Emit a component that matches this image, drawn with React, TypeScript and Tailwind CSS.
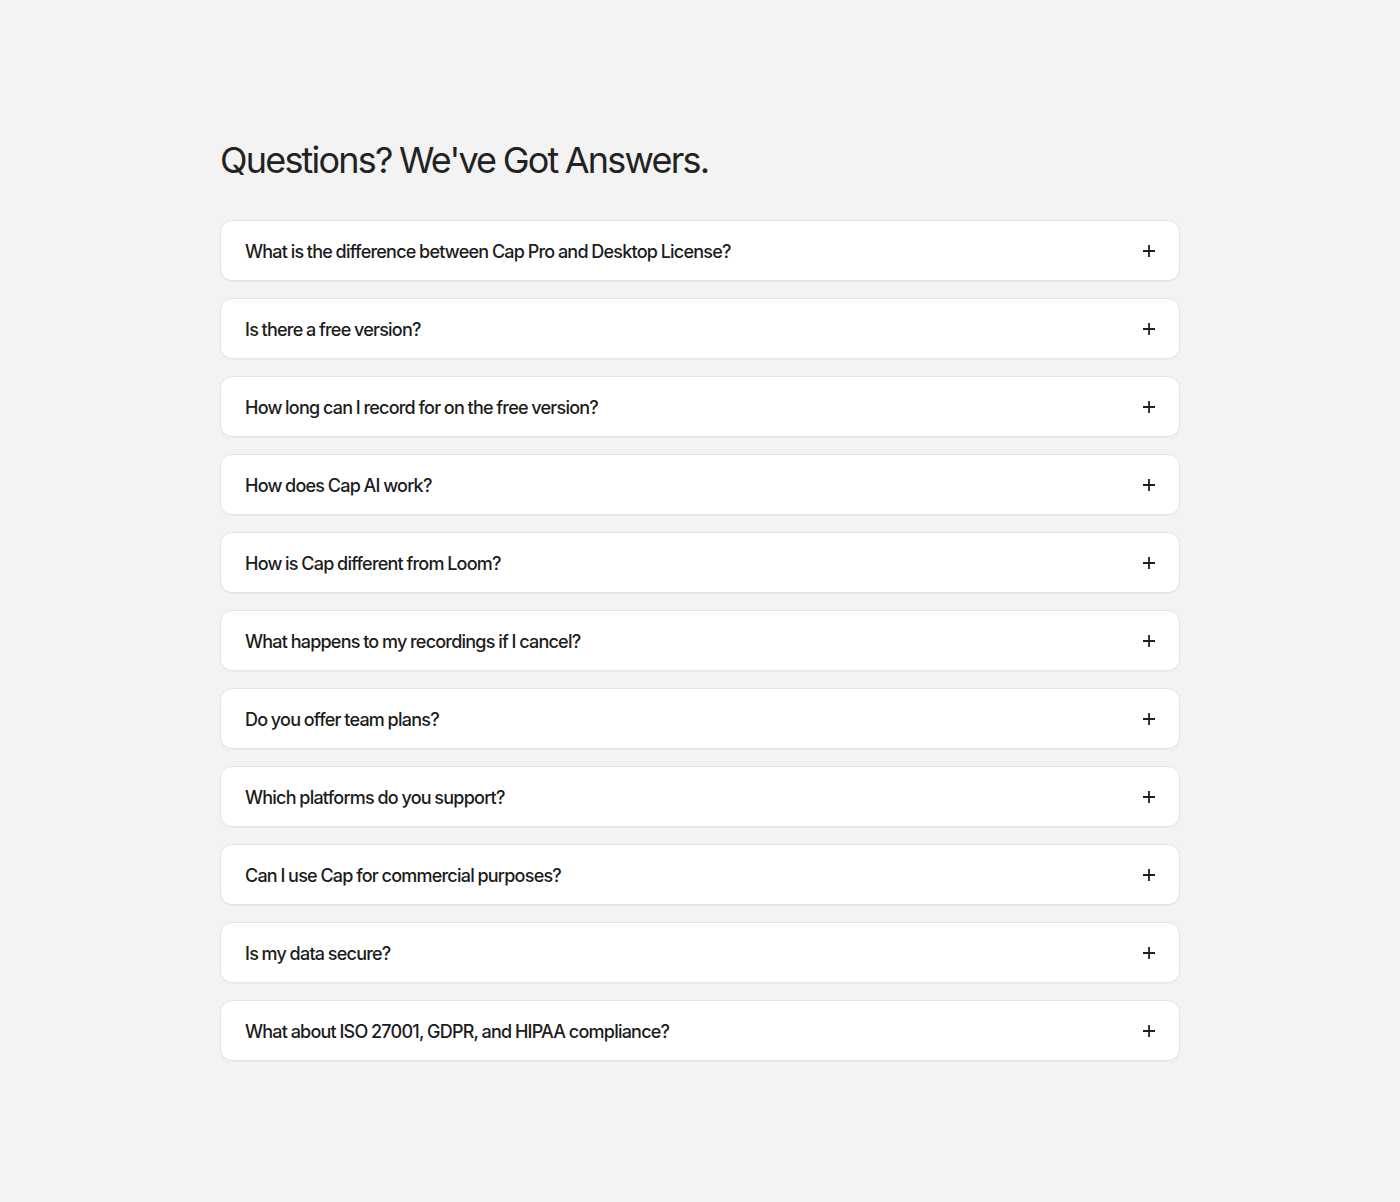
import React from "react";

const questions = [
  "What is the difference between Cap Pro and Desktop License?",
  "Is there a free version?",
  "How long can I record for on the free version?",
  "How does Cap AI work?",
  "How is Cap different from Loom?",
  "What happens to my recordings if I cancel?",
  "Do you offer team plans?",
  "Which platforms do you support?",
  "Can I use Cap for commercial purposes?",
  "Is my data secure?",
  "What about ISO 27001, GDPR, and HIPAA compliance?",
];

function Plus() {
  return (
    <svg width="14" height="14" viewBox="0 0 14 14" fill="none">
      <path d="M7 1v12M1 7h12" stroke="#1f1f1f" strokeWidth="1.8" />
    </svg>
  );
}

export default function App() {
  return (
    <div
      className="min-h-[1202px] w-full bg-[#f3f3f3] text-[#1c1c1c]"
      style={{ fontFamily: "Inter, 'Noto Sans', sans-serif" }}
    >
      <div className="mx-auto w-[960px] pt-[138px]">
        <h1 className="text-[36px] font-normal leading-[44px] tracking-[-0.05em] [word-spacing:-1px] text-[#222]">
          Questions? We've Got Answers.
        </h1>
        <div className="mt-[38px] flex flex-col gap-[17px]">
          {questions.map((q) => (
            <div
              key={q}
              className="flex h-[61px] items-center justify-between rounded-[12px] border border-[#e4e4e4] bg-white pl-6 pr-[23px] shadow-[0_1px_0_rgba(0,0,0,0.03)]"
            >
              <span className="pt-[1px] text-[18px] font-medium tracking-[-0.043em] [word-spacing:-0.5px] text-[#1c1c1c]">{q}</span>
              <Plus />
            </div>
          ))}
        </div>
      </div>
    </div>
  );
}
